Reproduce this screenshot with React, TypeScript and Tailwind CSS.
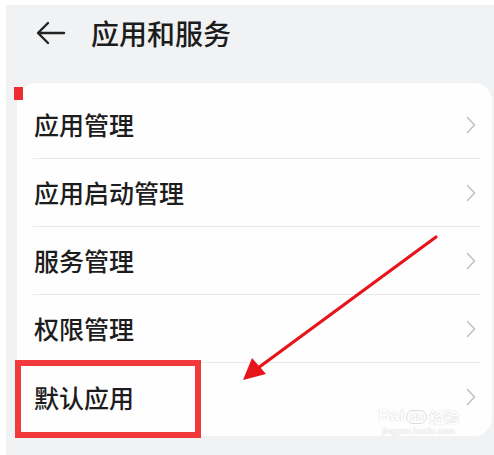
import React from 'react';

const items = ['应用管理', '应用启动管理', '服务管理', '权限管理', '默认应用'];

const Chevron: React.FC = () => (
  <svg width="10" height="18" viewBox="0 0 10 18" fill="none">
    <path d="M1.5 1.5 L8.5 9 L1.5 16.5" stroke="#c2c2c2" strokeWidth="1.6" strokeLinecap="round" strokeLinejoin="round" />
  </svg>
);

export default function App() {
  return (
    <div
      className="relative h-[455px] w-[494px] overflow-hidden border-t-[5px] border-l-[6px] border-white bg-[#f1f2f4]"
      style={{ fontFamily: '"Noto Sans CJK SC", "Noto Sans", sans-serif' }}
    >
      {/* header */}
      <div className="flex h-[78px] items-center pb-[22px]">
        <svg width="30" height="26" viewBox="0 0 30 26" fill="none" className="ml-[30px]">
          <path d="M28 13 H3 M12 3 L2 13 L12 23" stroke="#222" strokeWidth="2.4" strokeLinecap="round" strokeLinejoin="round" />
        </svg>
        <div className="ml-[25px] text-[28px] font-medium leading-none text-[#1c1c1c]">应用和服务</div>
      </div>

      {/* card */}
      <div className="ml-[11px] w-[475px] rounded-[18px] bg-[#fefefe] pt-[8px] pb-[5px]">
        {items.map((t, i) => (
          <div key={t} className="flex h-[68px] flex-col pl-[16px] pr-[11px]">
            <div className="flex flex-1 items-center justify-between pl-[1px] pr-[5px]">
              <span className="text-[25px] font-medium leading-none text-[#1d1d1d]">{t}</span>
              <Chevron />
            </div>
            {i < items.length - 1 && <div className="h-px bg-[#e9e9e9]" />}
          </div>
        ))}
      </div>

      {/* annotations */}
      <div className="absolute left-[8px] top-[82px] h-[13px] w-[9px] bg-[#ef2b2f]" />
      <div className="absolute left-[9px] top-[355px] h-[78px] w-[186px] border-[6px] border-[#f23a3c]" />
      <svg className="absolute left-[-6px] top-[-5px]" width="494" height="455" viewBox="0 0 494 455">
        <line x1="436" y1="237" x2="258" y2="368" stroke="#e8141c" strokeWidth="3.2" strokeLinecap="round" />
        <polygon points="243,380 252,358 266,374" fill="#e8141c" />
      </svg>

      {/* watermark */}
      <div className="absolute left-[372px] top-[402px] flex flex-col items-center text-white [text-shadow:0_0_1px_#bbb]">
        <div className="flex items-end gap-[2px] text-[17px] font-bold leading-none" style={{ fontFamily: '"Liberation Sans", sans-serif' }}>
          <span>Bai</span>
          <span className="rounded-full border border-[#ddd] px-[2px] text-[12px]">du</span>
          <span className="text-[15px]" style={{ fontFamily: '"Noto Sans CJK SC", sans-serif' }}>经验</span>
        </div>
        <div className="mt-[3px] text-[9px] leading-none" style={{ fontFamily: '"Liberation Sans", sans-serif' }}>jingyan.baidu.com</div>
      </div>
    </div>
  );
}
